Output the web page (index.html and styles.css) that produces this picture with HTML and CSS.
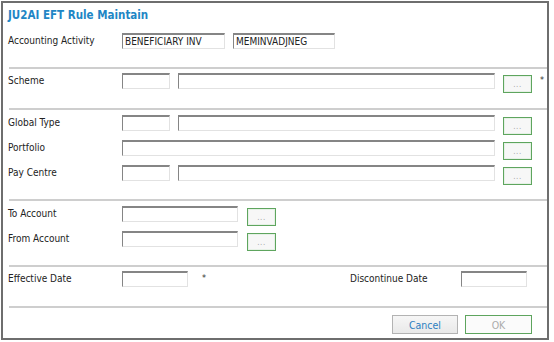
FILE: index.html
```html
<!DOCTYPE html>
<html lang="en">
<head>
  <meta charset="UTF-8" />
  <title>JU2AI EFT Rule Maintain</title>
  <link rel="stylesheet" href="styles.css">
</head>
<body>

  <div class="dialog">
    <div class="head">
      <div class="title">JU2AI EFT Rule Maintain</div>
      <div class="row">
        <label class="lbl">Accounting Activity</label>
        <input class="field w-act" type="text" value="BENEFICIARY INV" readonly>
        <input class="field w-act2" type="text" value="MEMINVADJNEG" readonly>
      </div>
    </div>

    <div class="section tight">
      <div class="row">
        <label class="lbl">Scheme</label>
        <input class="field w-code" type="text">
        <input class="field w-desc" type="text">
        <button class="pick">...</button>
        <span class="req">*</span>
      </div>
    </div>

    <div class="section">
      <div class="row">
        <label class="lbl">Global Type</label>
        <input class="field w-code" type="text">
        <input class="field w-desc" type="text">
        <button class="pick">...</button>
      </div>
      <div class="row">
        <label class="lbl">Portfolio</label>
        <input class="field w-full" type="text">
        <button class="pick">...</button>
      </div>
      <div class="row">
        <label class="lbl">Pay Centre</label>
        <input class="field w-code" type="text">
        <input class="field w-desc" type="text">
        <button class="pick">...</button>
      </div>
    </div>

    <div class="section">
      <div class="row">
        <label class="lbl">To Account</label>
        <input class="field w-acct" type="text">
        <button class="pick">...</button>
      </div>
      <div class="row">
        <label class="lbl">From Account</label>
        <input class="field w-acct" type="text">
        <button class="pick">...</button>
      </div>
    </div>

    <div class="section tight">
      <div class="row">
        <label class="lbl">Effective Date</label>
        <input class="field w-date" type="text">
        <span class="req req-date">*</span>
        <label class="lbl lbl-disc">Discontinue Date</label>
        <input class="field w-date" type="text">
      </div>
    </div>

    <div class="footer">
      <button class="btn btn-cancel">Cancel</button>
      <button class="btn btn-ok">OK</button>
    </div>
  </div>

</body>
</html>
```

FILE: styles.css
```css
body {
  margin: 0;
  background-color: #fff;
  font-family: "DejaVu Sans Condensed", "DejaVu Sans", sans-serif;
  font-stretch: condensed;
  font-size: 10px;
  color: #222;
}

.dialog {
  margin: 1px 0 0 1px;
  width: 548px;
  height: 339px;
  border: 2px solid #6e6e6e;
  padding-left: 6px;
  box-sizing: border-box;
}

.title {
  height: 24px;
  line-height: 24px;
  margin-left: -1px;
  font-size: 11.5px;
  font-weight: bold;
  color: #1e86c5;
}

.head {
  padding-bottom: 18px;
}

.head .row {
  margin-top: 6px;
}

.section {
  border-top: 2px solid #cecece;
  padding: 5px 0 18px;
  display: flex;
  flex-direction: column;
  gap: 9px;
}

.section.tight {
  padding: 4px 0 19px;
}

.row {
  display: flex;
  align-items: flex-start;
  height: 16px;
}

.lbl {
  width: 114px;
  margin-left: -1px;
  line-height: 16px;
  flex-shrink: 0;
}

.field {
  height: 16px;
  box-sizing: border-box;
  margin: 0 8px 0 0;
  padding: 0 2px;
  border: 1px solid;
  border-top-width: 2px;
  border-color: #858585 #e2e2e2 #e2e2e2 #858585;
  background: #fff;
  font-family: inherit;
  font-size: 10px;
  color: #222;
  outline: none;
}

.w-act { width: 103px; }
.w-act2 { width: 102px; }
.w-code { width: 48px; }
.w-desc { width: 317px; }
.w-full { width: 373px; }
.w-acct { width: 116px; }
.w-date { width: 66px; }

.pick {
  width: 29px;
  height: 18px;
  margin-top: 2px;
  padding: 0;
  border: 1px solid #5ea55e;
  box-shadow: inset 0 0 0 1px #e6f1e6;
  background: #f7f7f7;
  color: #a8a8a8;
  font-family: inherit;
  font-size: 8px;
  line-height: 18px;
  letter-spacing: 0.5px;
}

.row .w-acct {
  margin-right: 9px;
}

.req {
  margin-left: 8px;
  line-height: 14px;
  font-size: 9px;
  color: #333;
}

.req-date {
  margin-left: 6px;
  width: 149px;
}

.lbl-disc {
  width: 111px;
}

.footer {
  border-top: 2px solid #cecece;
  padding: 7px 15px 0 0;
  display: flex;
  justify-content: flex-end;
  gap: 7px;
}

.btn {
  height: 19px;
  padding: 0;
  font-family: inherit;
  font-size: 10.5px;
}

.btn-cancel {
  width: 66px;
  border: 1px solid #b3b3b3;
  background: linear-gradient(#f6f6f6, #e9e9e9);
  color: #2d7fc1;
}

.btn-ok {
  width: 67px;
  border: 1px solid #5ea55e;
  background: #fbfbfb;
  color: #acacac;
}
```
